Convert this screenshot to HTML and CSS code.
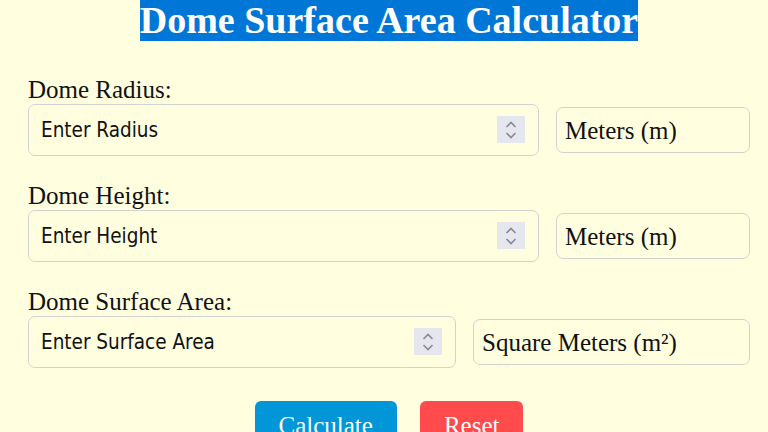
FILE: index.html
```html
<!DOCTYPE html>
<html lang="en">
<head>
    <meta charset="UTF-8">
    <meta name="viewport" content="width=device-width, initial-scale=1.0">
    <title>Dome Surface Area Calculator</title>
    <link rel="stylesheet" href="styles.css">
</head>
<body>
    <div class="calculator">
        <h1><span>Dome Surface Area Calculator</span></h1>

        <div class="field">
            <label for="radius">Dome Radius:</label>
            <div class="input-row">
                <div class="number-wrap">
                    <input type="number" id="radius" placeholder="Enter Radius">
                    <span class="spinner">
                        <svg width="14" height="20" viewBox="0 0 14 20"><path d="M2.5 7 L7 2.5 L11.5 7 M2.5 13 L7 17.5 L11.5 13" fill="none" stroke="#8a8a96" stroke-width="1.6"/></svg>
                    </span>
                </div>
                <select class="unit">
                    <option>Meters (m)</option>
                </select>
            </div>
        </div>

        <div class="field">
            <label for="height">Dome Height:</label>
            <div class="input-row">
                <div class="number-wrap">
                    <input type="number" id="height" placeholder="Enter Height">
                    <span class="spinner">
                        <svg width="14" height="20" viewBox="0 0 14 20"><path d="M2.5 7 L7 2.5 L11.5 7 M2.5 13 L7 17.5 L11.5 13" fill="none" stroke="#8a8a96" stroke-width="1.6"/></svg>
                    </span>
                </div>
                <select class="unit">
                    <option>Meters (m)</option>
                </select>
            </div>
        </div>

        <div class="field">
            <label for="area">Dome Surface Area:</label>
            <div class="input-row">
                <div class="number-wrap">
                    <input type="number" id="area" placeholder="Enter Surface Area">
                    <span class="spinner">
                        <svg width="14" height="20" viewBox="0 0 14 20"><path d="M2.5 7 L7 2.5 L11.5 7 M2.5 13 L7 17.5 L11.5 13" fill="none" stroke="#8a8a96" stroke-width="1.6"/></svg>
                    </span>
                </div>
                <select class="unit">
                    <option>Square Meters (m²)</option>
                </select>
            </div>
        </div>

        <div class="buttons">
            <button class="calc-button">Calculate</button>
            <button class="reset-button">Reset</button>
        </div>
    </div>
</body>
</html>
```

FILE: styles.css
```css
body {
    margin: 0;
    background-color: #ffffe0;
    font-family: "Liberation Serif", "Times New Roman", serif;
    color: #111;
}

.calculator {
    padding: 0 18px 0 28px;
}

h1 {
    margin: 0 0 35px;
    text-align: center;
    font-size: 38px;
    font-weight: bold;
    line-height: 41px;
}

h1 span {
    background-color: #0077d7;
    color: #fff;
}

.field {
    margin-bottom: 26px;
}

.field label {
    display: block;
    font-size: 25px;
    line-height: 27px;
    margin-bottom: 1px;
}

.input-row {
    display: flex;
    align-items: center;
    gap: 17px;
}

.number-wrap {
    position: relative;
    flex: 1;
}

.number-wrap input {
    width: 100%;
    height: 52px;
    box-sizing: border-box;
    padding: 0 50px 0 12px;
    border: 1.5px solid #d3d3d0;
    border-radius: 7px;
    background: transparent;
    font-family: "DejaVu Sans Condensed", "DejaVu Sans", sans-serif;
    font-size: 20.5px;
    color: #111;
    -moz-appearance: textfield;
}

.number-wrap input::placeholder {
    color: #111;
}

.number-wrap input::-webkit-inner-spin-button,
.number-wrap input::-webkit-outer-spin-button {
    -webkit-appearance: none;
    margin: 0;
}

/* fake spin button drawn over the input */
.spinner {
    position: absolute;
    right: 14px;
    top: 12px;
    width: 28px;
    height: 27px;
    background-color: #e6e6ee;
    display: flex;
    align-items: center;
    justify-content: center;
}

.unit {
    -webkit-appearance: none;
    appearance: none;
    height: 46px;
    padding: 0 72px 0 8px;
    border: 1.5px solid #d3d3d0;
    border-radius: 7px;
    background: transparent;
    font-family: "Liberation Serif", "Times New Roman", serif;
    font-size: 25px;
    color: #111;
}

.buttons {
    display: flex;
    justify-content: center;
    gap: 23px;
    margin-top: 33px;
}

.buttons button {
    border: none;
    border-radius: 6px;
    padding: 11px 24px;
    font-family: "Liberation Serif", "Times New Roman", serif;
    font-size: 25px;
    color: #fff;
    cursor: pointer;
}

.calc-button {
    background-color: #0096d8;
}

.reset-button {
    background-color: #ff4b4b;
}
```
